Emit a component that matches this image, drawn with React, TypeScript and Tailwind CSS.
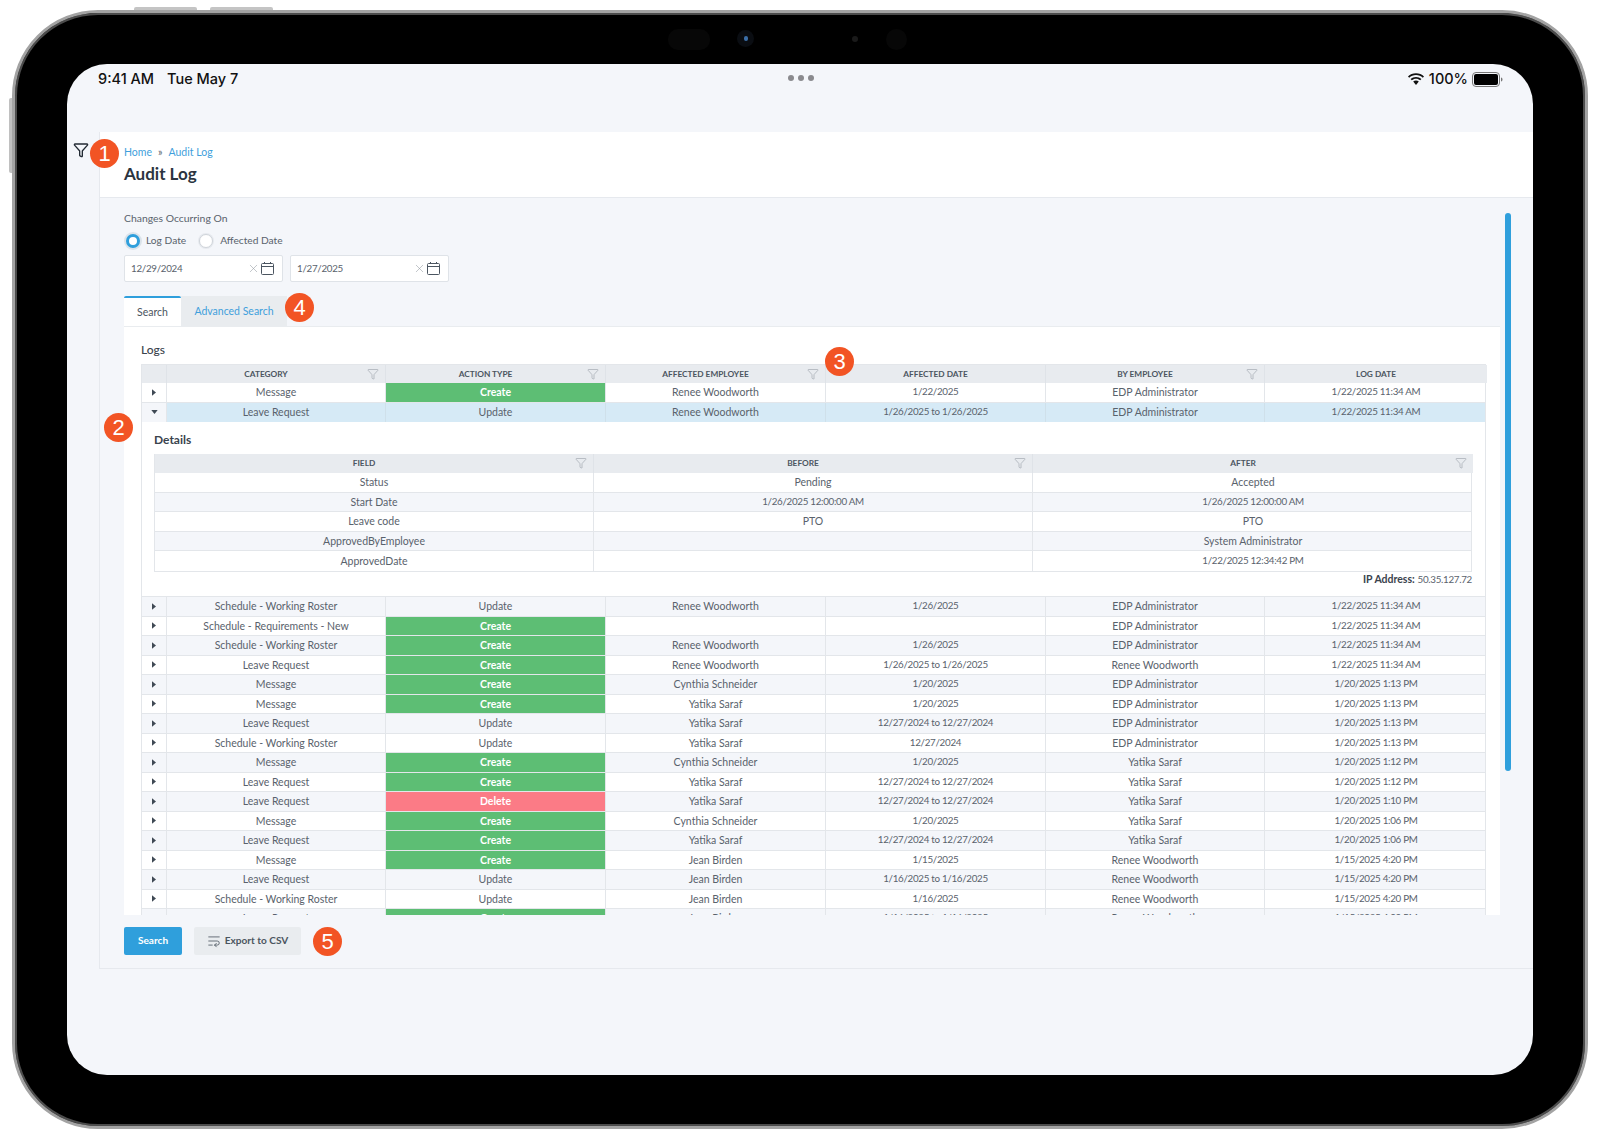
import React from "react";
import { Filter, WrapText, X } from "lucide-react";

const font = "font-['Lato','Liberation_Sans',sans-serif]";
const mainCols = "grid grid-cols-[25px_219px_220px_220px_220px_219px_222px]";
const detailCols = "grid grid-cols-[439px_439px_440px]";
const numeric = "text-[9.8px] tracking-[-0.3px]";
const cell = "flex items-center justify-center border-r border-[#e3e6ea]";
const num = (s: string) => (/\d/.test(s) ? numeric : "");

type Row = [string, string, string, string, string, string];
const before: Row = ["Message", "Create", "Renee Woodworth", "1/22/2025", "EDP Administrator", "1/22/2025 11:34 AM"];
const selected: Row = ["Leave Request", "Update", "Renee Woodworth", "1/26/2025 to 1/26/2025", "EDP Administrator", "1/22/2025 11:34 AM"];
const rows: Row[] = [
  ["Schedule - Working Roster", "Update", "Renee Woodworth", "1/26/2025", "EDP Administrator", "1/22/2025 11:34 AM"],
  ["Schedule - Requirements - New", "Create", "", "", "EDP Administrator", "1/22/2025 11:34 AM"],
  ["Schedule - Working Roster", "Create", "Renee Woodworth", "1/26/2025", "EDP Administrator", "1/22/2025 11:34 AM"],
  ["Leave Request", "Create", "Renee Woodworth", "1/26/2025 to 1/26/2025", "Renee Woodworth", "1/22/2025 11:34 AM"],
  ["Message", "Create", "Cynthia Schneider", "1/20/2025", "EDP Administrator", "1/20/2025 1:13 PM"],
  ["Message", "Create", "Yatika Saraf", "1/20/2025", "EDP Administrator", "1/20/2025 1:13 PM"],
  ["Leave Request", "Update", "Yatika Saraf", "12/27/2024 to 12/27/2024", "EDP Administrator", "1/20/2025 1:13 PM"],
  ["Schedule - Working Roster", "Update", "Yatika Saraf", "12/27/2024", "EDP Administrator", "1/20/2025 1:13 PM"],
  ["Message", "Create", "Cynthia Schneider", "1/20/2025", "Yatika Saraf", "1/20/2025 1:12 PM"],
  ["Leave Request", "Create", "Yatika Saraf", "12/27/2024 to 12/27/2024", "Yatika Saraf", "1/20/2025 1:12 PM"],
  ["Leave Request", "Delete", "Yatika Saraf", "12/27/2024 to 12/27/2024", "Yatika Saraf", "1/20/2025 1:10 PM"],
  ["Message", "Create", "Cynthia Schneider", "1/20/2025", "Yatika Saraf", "1/20/2025 1:06 PM"],
  ["Leave Request", "Create", "Yatika Saraf", "12/27/2024 to 12/27/2024", "Yatika Saraf", "1/20/2025 1:06 PM"],
  ["Message", "Create", "Jean Birden", "1/15/2025", "Renee Woodworth", "1/15/2025 4:20 PM"],
  ["Leave Request", "Update", "Jean Birden", "1/16/2025 to 1/16/2025", "Renee Woodworth", "1/15/2025 4:20 PM"],
  ["Schedule - Working Roster", "Update", "Jean Birden", "1/16/2025", "Renee Woodworth", "1/15/2025 4:20 PM"],
  ["Leave Request", "Create", "Jean Birden", "1/16/2025 to 1/16/2025", "Renee Woodworth", "1/15/2025 4:00 PM"],
];
const details = [
  ["Status", "Pending", "Accepted"],
  ["Start Date", "1/26/2025 12:00:00 AM", "1/26/2025 12:00:00 AM"],
  ["Leave code", "PTO", "PTO"],
  ["ApprovedByEmployee", "", "System Administrator"],
  ["ApprovedDate", "", "1/22/2025 12:34:42 PM"],
];

function Badge({ n, className }: { n: number; className: string }) {
  return (
    <div className={`absolute z-10 flex h-[29px] w-[29px] items-center justify-center rounded-full bg-[#f25424] font-['Liberation_Sans',sans-serif] text-[22px] leading-none text-white ${className}`}>
      {n}
    </div>
  );
}

function Head({ label, filter = true, tall = false }: { label: string; filter?: boolean; tall?: boolean }) {
  return (
    <div className={`relative flex items-center justify-center border-r border-[#dfe3e8] bg-[#e8ebef] last:border-r-0 ${tall ? "h-[19px]" : "h-[18px]"}`}>
      <span className={`text-[8.3px] font-bold text-[#4b5560] ${filter ? "pr-[20px]" : ""}`}>{label}</span>
      {filter && <Filter strokeWidth={1.1} className="absolute right-[6px] top-[3px] h-[12px] w-[12px] text-[#8f979f]" />}
    </div>
  );
}

function Action({ v }: { v: string }) {
  const cls =
    v === "Create"
      ? "bg-[#5dbe74] font-bold text-white"
      : v === "Delete"
      ? "bg-[#fb7b86] font-bold text-white"
      : "";
  return <div className={`${cell} ${cls}`}>{v}</div>;
}

function LogRow({ r, tone }: { r: Row; tone: string }) {
  return (
    <div className={`${mainCols} h-[19.5px] border-b border-[#e3e6ea] text-[10.5px] leading-none text-[#59626c] ${tone}`}>
      <div className={cell}>
        <svg viewBox="0 0 5 8" className="h-[7px] w-[4px]"><path d="M0 0l5 4-5 4z" fill="#3f4954" /></svg>
      </div>
      <div className={cell}>{r[0]}</div>
      <Action v={r[1]} />
      <div className={cell}>{r[2]}</div>
      <div className={`${cell} ${num(r[3])}`}>{r[3]}</div>
      <div className={cell}>{r[4]}</div>
      <div className={`flex items-center justify-center ${numeric}`}>{r[5]}</div>
    </div>
  );
}

function DateBox({ value }: { value: string }) {
  return (
    <div className="flex h-[27px] w-[159px] items-center rounded-[2px] border border-[#dfe3e8] bg-white pl-[6px] pr-[8px] text-[9.8px] tracking-[-0.3px] text-[#59626c]">
      <span className="flex-1">{value}</span>
      <X strokeWidth={1} className="mr-[1px] h-[13px] w-[13px] text-[#8f979f]" />
      <svg viewBox="0 0 13 13" className="h-[13px] w-[13px]" fill="none" stroke="#4b5560" strokeWidth="1">
        <rect x="0.5" y="1.500" width="12" height="11" rx="1" />
        <path d="M0.500 4.500h12M3.500 0v2M9.500 0v2" />
      </svg>
    </div>
  );
}

export default function App() {
  return (
    <div className={`${font} h-[1139px] w-[1600px] overflow-hidden bg-white pl-[12px] pt-[10px]`}>
      <div className="relative h-[1119px] w-[1576px] rounded-[86px] border-[3px] border-[#a3a3a3] bg-black py-[51px] pl-[52px] shadow-[inset_0_0_0_2px_#4c4c4c]">
        <div className="absolute left-[119px] top-[-6px] h-[3px] w-[63px] rounded-t-[2px] bg-[#c4c4c4]" />
        <div className="absolute left-[195px] top-[-6px] h-[3px] w-[63px] rounded-t-[2px] bg-[#c4c4c4]" />
        <div className="absolute left-[-6px] top-[85px] h-[75px] w-[3px] rounded-l-[2px] bg-[#c0c0c0]" />
        <div className="absolute left-[653px] top-[16px] h-[21px] w-[42px] rounded-[10px] bg-[#070707]" />
        <div className="absolute left-[722px] top-[17px] flex h-[17px] w-[17px] items-center justify-center rounded-full bg-[#0a0d12]">
          <div className="h-[5px] w-[4px] rounded-full bg-[#3b6ea8]" />
        </div>
        <div className="absolute left-[837px] top-[23px] h-[6px] w-[6px] rounded-full bg-[#1a1a1a]" />
        <div className="absolute left-[871px] top-[16px] h-[21px] w-[21px] rounded-full bg-[#070707]" />

        <div className="relative flex h-[1011px] w-[1466px] flex-col overflow-hidden rounded-[40px] bg-[#f4f6fa]">
          <div className="flex h-[68px] items-start pl-[31px] pr-[29px] pt-[6px] font-['Inter',sans-serif] text-[14.5px] font-medium leading-[18px] text-[#111]">
            <div className="flex flex-1 gap-[13px]">
              <span>9:41 AM</span>
              <span>Tue May 7</span>
            </div>
            <div className="flex gap-[4px] pt-[5px]">
              <span className="h-[6px] w-[6px] rounded-full bg-[#8a8a8e]" />
              <span className="h-[6px] w-[6px] rounded-full bg-[#8a8a8e]" />
              <span className="h-[6px] w-[6px] rounded-full bg-[#8a8a8e]" />
            </div>
            <div className="flex flex-1 items-center justify-end gap-[4px]">
              <svg viewBox="0 0 18 13" className="h-[14px] w-[18px]" fill="#111">
                <path d="M9 2.600c2.600 0 5 1 6.800 2.700l1.200-1.300C14.900 2 12.100.8 9 .8S3.100 2 1 4l1.200 1.300C4 3.600 6.400 2.600 9 2.600z" />
                <path d="M9 6.200c1.600 0 3 .6 4.200 1.600l1.200-1.300C13 5.200 11.100 4.400 9 4.400s-4 .8-5.400 2.100l1.200 1.300C6 6.800 7.400 6.200 9 6.200z" />
                <path d="M9 8c-1.100 0-2 .4-2.800 1.100L9 12.400l2.800-3.300C11 8.400 10.100 8 9 8z" />
              </svg>
              <span>100%</span>
              <svg viewBox="0 0 32 15" className="h-[15px] w-[32px]">
                <rect x="0.500" y="0.500" width="27" height="14" rx="3.500" fill="none" stroke="#777" />
                <rect x="2" y="2" width="24" height="11" rx="2" fill="#000" />
                <path d="M29 5.500c1 .3 1.500 1 1.500 2s-.5 1.700-1.500 2z" fill="#777" />
              </svg>
            </div>
          </div>

          <div className="flex h-[837px]">
            <div className="w-[33px] border-r border-[#e6e9ee] pl-[6px] pt-[10px]">
              <Filter strokeWidth={2} className="h-[16px] w-[16px] text-[#222a33]" />
            </div>
            <div className="flex w-[1433px] flex-col">
              <div className="h-[66px] border-b border-[#e6e9ee] bg-white pl-[24px] pt-[13px]">
                <div className="flex gap-[6px] text-[10.5px] leading-[14px] text-[#3f9fdc]">
                  <span>Home</span>
                  <span className="text-[#59626c]">»</span>
                  <span>Audit Log</span>
                </div>
                <div className="mt-[3px] text-[17px] font-bold leading-[24px] text-[#2b3440]">Audit Log</div>
              </div>
              <div className="relative flex-1 border-b border-[#e6e9ee] pl-[24px] pr-[33px] pt-[13px]">
                <div className="text-[10.4px] leading-[14px] text-[#59626c]">Changes Occurring On</div>
                <div className="mt-[8px] flex h-[16px] items-center text-[10.2px] text-[#59626c]">
                  <span className="ml-[2px] flex h-[14px] w-[14px] items-center justify-center rounded-full border-[3px] border-[#2f9fdc] bg-white shadow-[0_0_0_2px_#dbe3ea]" />
                  <span className="ml-[6px]">Log Date</span>
                  <span className="ml-[13px] h-[14px] w-[14px] rounded-full border border-[#cfd4da] bg-white shadow-[0_0_0_1px_#e6e9ee]" />
                  <span className="ml-[7px]">Affected Date</span>
                </div>
                <div className="mt-[6px] flex gap-[7px]">
                  <DateBox value="12/29/2024" />
                  <DateBox value="1/27/2025" />
                </div>
                <div className="mt-[14px] flex h-[31px] items-stretch border-b border-[#e9ecef] text-[10.5px]">
                  <div className="flex w-[57px] items-center justify-center rounded-t-[2px] border-t-2 border-[#2f9fdc] bg-white pt-[1px] text-[#4b5560]">Search</div>
                  <div className="flex w-[106px] items-center justify-center bg-[#e9ecef] pt-[2px] text-[#3f9fdc]">Advanced Search</div>
                </div>
                <div className="h-[588px] overflow-hidden bg-white pl-[17px] pr-[14px]">
                  <div className="pt-[16px] text-[12px] font-medium leading-[14px] text-[#3a434d]">Logs</div>
                  <div className="mt-[7px] border-l border-r border-t border-[#e3e6ea]">
                    <div className={mainCols}>
                      <div className="h-[18px] border-r border-[#dfe3e8] bg-[#e8ebef]" />
                      <Head label="CATEGORY" />
                      <Head label="ACTION TYPE" />
                      <Head label="AFFECTED EMPLOYEE" />
                      <Head label="AFFECTED DATE" filter={false} />
                      <Head label="BY EMPLOYEE" />
                      <Head label="LOG DATE" filter={false} />
                    </div>
                    <LogRow r={before} tone="bg-white" />
                    <div className={`${mainCols} h-[19.5px] bg-[#d6eaf6] text-[10.5px] leading-none text-[#59626c]`}>
                      <div className="flex items-center justify-center border-r border-[#e3e6ea] bg-[#f4f6fa]">
                        <svg viewBox="0 0 8 5" className="h-[4px] w-[7px]"><path d="M0 0h8L4 5z" fill="#3f4954" /></svg>
                      </div>
                      <div className="flex items-center justify-center border-r border-[#cfe0ea]">{selected[0]}</div>
                      <div className="flex items-center justify-center border-r border-[#cfe0ea]">{selected[1]}</div>
                      <div className="flex items-center justify-center border-r border-[#cfe0ea]">{selected[2]}</div>
                      <div className={`flex items-center justify-center border-r border-[#cfe0ea] ${numeric}`}>{selected[3]}</div>
                      <div className="flex items-center justify-center border-r border-[#cfe0ea]">{selected[4]}</div>
                      <div className={`flex items-center justify-center ${numeric}`}>{selected[5]}</div>
                    </div>
                    <div className="h-[175px] border-b border-[#e3e6ea] pl-[12px]">
                      <div className="pt-[11px] text-[12px] font-bold leading-[14px] text-[#3a434d]">Details</div>
                      <div className="mt-[7px] w-[1318px] border-b border-l border-r border-[#e3e6ea]">
                        <div className={detailCols}>
                          <Head label="FIELD" tall />
                          <Head label="BEFORE" tall />
                          <Head label="AFTER" tall />
                        </div>
                        {details.map((d, i) => (
                          <div key={d[0]} className={`${detailCols} h-[19.5px] border-b border-[#e3e6ea] text-[10.5px] leading-none text-[#59626c] last:border-b-0 ${i % 2 ? "bg-[#f4f6fa]" : "bg-white"}`}>
                            <div className={cell}>{d[0]}</div>
                            <div className={`${cell} ${num(d[1])}`}>{d[1]}</div>
                            <div className={`flex items-center justify-center ${num(d[2])}`}>{d[2]}</div>
                          </div>
                        ))}
                      </div>
                      <div className="w-[1318px] text-right text-[10.5px] leading-[14px] text-[#59626c]">
                        <b className="text-[#3a434d]">IP Address:</b> <span className={numeric}>50.35.127.72</span>
                      </div>
                    </div>
                    {rows.map((r, i) => (
                      <LogRow key={i} r={r} tone={i % 2 ? "bg-white" : "bg-[#f4f6fa]"} />
                    ))}
                  </div>
                </div>
                <div className="mt-[12px] flex gap-[12px] text-[10.1px] font-bold">
                  <button className="h-[28px] w-[58px] rounded-[2px] bg-[#2f9fdc] text-white">Search</button>
                  <button className="flex h-[28px] w-[107px] items-center justify-center gap-[4px] rounded-[2px] bg-[#e9ecef] text-[#4b5560]">
                    <WrapText strokeWidth={1.4} className="h-[14px] w-[14px]" />
                    Export to CSV
                  </button>
                </div>
                <div className="absolute left-[1405px] top-[15px] h-[558px] w-[6px] rounded-full bg-[#2f9fdc]" />
              </div>
            </div>
          </div>

          <Badge n={1} className="left-[23px] top-[75px]" />
          <Badge n={2} className="left-[37px] top-[349px]" />
          <Badge n={3} className="left-[758px] top-[283px]" />
          <Badge n={4} className="left-[218px] top-[229px]" />
          <Badge n={5} className="left-[246px] top-[863px]" />
        </div>
      </div>
    </div>
  );
}
